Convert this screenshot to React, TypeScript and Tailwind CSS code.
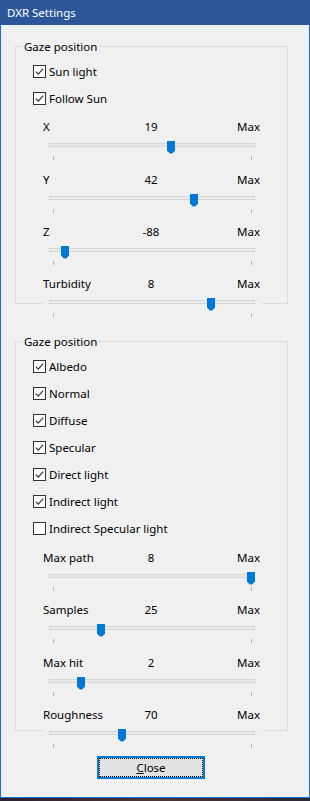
import React from 'react';

type SliderItem = { label: string; value: string; pos: number };

const topChecks = ['Sun light', 'Follow Sun'];
const topSliders: SliderItem[] = [
  { label: 'X', value: '19', pos: 0.595 },
  { label: 'Y', value: '42', pos: 0.71 },
  { label: 'Z', value: '-88', pos: 0.06 },
  { label: 'Turbidity', value: '8', pos: 0.8 },
];

const bottomChecks = [
  { label: 'Albedo', checked: true },
  { label: 'Normal', checked: true },
  { label: 'Diffuse', checked: true },
  { label: 'Specular', checked: true },
  { label: 'Direct light', checked: true },
  { label: 'Indirect light', checked: true },
  { label: 'Indirect Specular light', checked: false },
];
const bottomSliders: SliderItem[] = [
  { label: 'Max path', value: '8', pos: 1 },
  { label: 'Samples', value: '25', pos: 0.24 },
  { label: 'Max hit', value: '2', pos: 0.14 },
  { label: 'Roughness', value: '70', pos: 0.346 },
];

function CheckRow({ label, checked = true }: { label: string; checked?: boolean }) {
  return (
    <div className="h-[27px] flex items-center pl-[17px] gap-[3px]">
      <svg width="13" height="13" viewBox="0 0 13 13" className="shrink-0">
        <rect x="0.5" y="0.5" width="12" height="12" fill="#ffffff" stroke="#333333" />
        {checked && (
          <path d="M2.8 6.6 L5.2 9.1 L10.2 3.6" fill="none" stroke="#333333" strokeWidth="1.2" />
        )}
      </svg>
      <span>{label}</span>
    </div>
  );
}

function Slider({ item, className }: { item: SliderItem; className: string }) {
  return (
    <div className={`pl-[27px] ${className}`}>
      <div className="flex h-[16px] leading-[16px] w-[219px]">
        <span className="w-[79px]">{item.label}</span>
        <span className="w-[58px] text-center">{item.value}</span>
        <span className="w-[80px] text-right">Max</span>
      </div>
      <div className="relative mt-[5px] w-[219px] bg-[#f0f0f0] pt-[3px] pb-[1px]">
        <div className="ml-[6px] w-[206px] h-[4px] border border-[#d6d6d6] bg-[#e9e9e9]" />
        <div className="mt-[9px] flex justify-between pl-[10px] pr-[10px]">
          <div className="w-[1px] h-[4px] bg-[#b4b4b4]" />
          <div className="w-[1px] h-[4px] bg-[#b4b4b4]" />
        </div>
        <svg
          width="8"
          height="13"
          viewBox="0 0 8 13"
          className="absolute top-[1px]"
          style={{ left: 6 + item.pos * 198 }}
        >
          <path d="M0 0 H8 V9.5 L5.2 12.5 H2.8 L0 9.5 Z" fill="#0078d7" />
        </svg>
      </div>
    </div>
  );
}

function Group({ children, className }: { children: React.ReactNode; className: string }) {
  return (
    <fieldset className={`ml-[14px] w-[273px] border border-[#dcdcdc] p-0 m-0 ${className}`}>
      <legend className="ml-[6px] px-[2px] leading-[15px]">Gaze position</legend>
      {children}
    </fieldset>
  );
}

export default function App() {
  return (
    <div className="w-[310px] h-[801px] flex flex-col font-['Noto_Sans',sans-serif] text-[11.5px] text-black">
      <div className="h-[25px] shrink-0 bg-[#2b579a] text-white pl-[7px] flex items-center">
        DXR Settings
      </div>
      <div className="h-[773px] shrink-0 bg-[#f0f0f0] border-x border-b border-[#1670d4] pt-[14px]">
        <Group className="">
          <div className="pt-[4px]">
            {topChecks.map(c => (
              <CheckRow key={c} label={c} />
            ))}
          </div>
          <Slider item={topSliders[0]} className="mt-[7px]" />
          <Slider item={topSliders[1]} className="mt-[11px]" />
          <Slider item={topSliders[2]} className="mt-[10px]" />
          <Slider item={topSliders[3]} className="mt-[10px] mb-[-15px]" />
        </Group>

        <Group className="mt-[30px]">
          <div className="pt-[4px]">
            {bottomChecks.map(c => (
              <CheckRow key={c.label} label={c.label} checked={c.checked} />
            ))}
          </div>
          <Slider item={bottomSliders[0]} className="mt-[8px]" />
          <Slider item={bottomSliders[1]} className="mt-[10px]" />
          <Slider item={bottomSliders[2]} className="mt-[11px]" />
          <Slider item={bottomSliders[3]} className="mt-[10px] mb-[-19px]" />
        </Group>

        <button
          type="button"
          className="block ml-[96px] mt-[25px] w-[108px] h-[23px] border-2 border-[#0078d7] bg-[#e1e1e1] p-0"
        >
          <div className="h-full w-full border border-dotted border-black flex items-center justify-center">
            <span>
              <span className="underline">C</span>lose
            </span>
          </div>
        </button>
      </div>
      <div className="h-[3px] shrink-0 bg-gradient-to-r from-[#2a2230] via-[#4a3434] to-[#2c2838]" />
    </div>
  );
}
